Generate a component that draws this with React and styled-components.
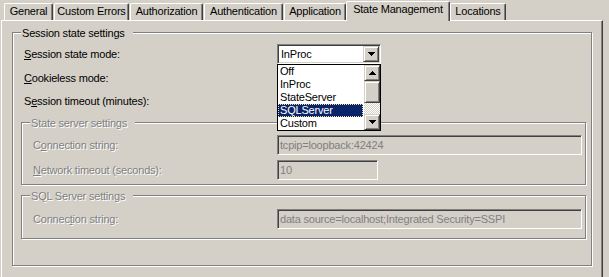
import React from 'react';
import styled, { createGlobalStyle } from 'styled-components';

const GlobalStyle = createGlobalStyle`
  html, body { margin: 0; padding: 0; background: #D4D0C8; overflow: hidden; }
  body {
    font-family: "Liberation Sans", Arial, sans-serif;
    font-size: 11px;
    line-height: 13px;
    letter-spacing: -0.2px;
    color: #000;
  }
  * { box-sizing: border-box; }
  u { text-decoration-thickness: 1px; text-underline-offset: 1px; }
`;

const Window = styled.div`
  width: 609px;
  height: 277px;
  overflow: hidden;
  padding-top: 1px;
`;

const TabStrip = styled.div`
  display: flex;
  align-items: flex-end;
  height: 19px;
  padding-left: 4px;
  position: relative;
  z-index: 2;
`;

const Tab = styled.div`
  flex: none;
  width: ${(p) => p.$w}px;
  margin-right: ${(p) => p.$m}px;
  height: ${(p) => (p.$active ? 20 : 17)}px;
  margin-bottom: ${(p) => (p.$active ? -1 : 0)}px;
  background: #D4D0C8;
  border-left: 1px solid #fff;
  border-top: 1px solid #fff;
  border-right: 1px solid #404040;
  border-radius: 2px 2px 0 0;
  box-shadow: inset -1px 0 0 #808080;
  padding-top: 1px;
  text-align: center;
  white-space: nowrap;
`;

const Panel = styled.div`
  margin-left: 1px;
  width: 602px;
  height: 300px;
  border-top: 1px solid #fff;
  border-left: 1px solid #fff;
  border-right: 1px solid #404040;
  border-bottom: 1px solid #404040;
  box-shadow: inset -1px -1px 0 #808080;
  padding: 11px 10px 0 10px;
`;

const Group = styled.div`
  display: flex;
  flex-direction: column;
  align-items: flex-start;
  border: 1px solid #808080;
  box-shadow: inset 1px 1px 0 #fff, 1px 1px 0 #fff;
  margin-top: ${(p) => p.$mt || 0}px;
  padding: 0 ${(p) => p.$pr || 0}px ${(p) => p.$pb || 0}px ${(p) => p.$pl || 0}px;
  align-self: stretch;
`;

const Caption = styled.div`
  margin: -6px 0 0 ${(p) => p.$ml || 0}px;
  padding: 0 8px 0 1px;
  background: #D4D0C8;
  line-height: 13px;
  white-space: nowrap;
  color: ${(p) => (p.$disabled ? '#808080' : '#000')};
  text-shadow: ${(p) => (p.$disabled ? '1px 1px 0 #fff' : 'none')};
`;

const Row = styled.div`
  display: grid;
  grid-template-columns: ${(p) => p.$label}px auto;
  align-items: center;
  height: 20px;
  margin-top: ${(p) => p.$mt}px;
  padding-left: ${(p) => p.$pl}px;
`;

const Label = styled.div`
  white-space: nowrap;
  color: ${(p) => (p.$disabled ? '#808080' : '#000')};
  text-shadow: ${(p) => (p.$disabled ? '1px 1px 0 #fff' : 'none')};
`;

const sunken = `
  border: 1px solid;
  border-color: #808080 #fff #fff #808080;
  box-shadow: inset 1px 1px 0 #404040, inset -1px -1px 0 #D4D0C8;
`;

const raised = `
  border: 1px solid;
  border-color: #D4D0C8 #404040 #404040 #D4D0C8;
  box-shadow: inset 1px 1px 0 #fff, inset -1px -1px 0 #808080;
  background: #D4D0C8;
`;

const TextBox = styled.div`
  ${sunken}
  width: ${(p) => p.$w}px;
  height: 20px;
  padding: 1px 1px 1px 2px;
  line-height: 16px;
  background: #D4D0C8;
  color: #808080;
  white-space: nowrap;
  overflow: hidden;
`;

const Combo = styled.div`
  position: relative;
  z-index: 5;
  width: 104px;
  height: 20px;
`;

const ComboField = styled.div`
  ${sunken}
  display: flex;
  align-items: center;
  height: 20px;
  padding: 1px;
  background: #fff;
`;

const ComboText = styled.div`
  flex: 1;
  padding-left: 2px;
  line-height: 16px;
`;

const ArrowButton = styled.div`
  ${raised}
  flex: none;
  display: flex;
  align-items: center;
  justify-content: center;
  width: 16px;
  height: ${(p) => p.$h || 16}px;
`;

const DropList = styled.div`
  position: absolute;
  top: 20px;
  left: 0;
  width: 104px;
  height: 67px;
  border: 1px solid #000;
  background: #fff;
  display: flex;
`;

const Items = styled.div`
  flex: 1;
  display: flex;
  flex-direction: column;
  padding-right: 1px;
`;

const Item = styled.div`
  height: 13px;
  line-height: 13px;
  padding-left: 2px;
  white-space: nowrap;
  background: ${(p) => (p.$sel ? '#0A246A' : 'transparent')};
  color: ${(p) => (p.$sel ? '#fff' : '#000')};
  outline: ${(p) => (p.$sel ? '1px dotted #F5DB95' : 'none')};
  outline-offset: -1px;
`;

const ScrollBar = styled.div`
  flex: none;
  width: 16px;
  display: flex;
  flex-direction: column;
`;

const Thumb = styled.div`
  ${raised}
  height: 22px;
`;

const Track = styled.div`
  flex: 1;
  background: repeating-conic-gradient(#fff 0 25%, #D4D0C8 0 50%) 0 0 / 2px 2px;
`;

const Arrow = ({ up }) => (
  <svg width="7" height="4" viewBox="0 0 7 4" style={{ display: 'block' }}>
    <path d={up ? 'M3.5 0 L7 4 L0 4 Z' : 'M0 0 L7 0 L3.5 4 Z'} fill="#000" shapeRendering="crispEdges" />
  </svg>
);

const tabs = [
  { label: 'General', w: 49, m: 1 },
  { label: 'Custom Errors', w: 75, m: 1 },
  { label: 'Authorization', w: 73, m: 1 },
  { label: 'Authentication', w: 79, m: 1 },
  { label: 'Application', w: 62, m: 0 },
  { label: 'State Management', w: 104, m: 0, active: true },
  { label: 'Locations', w: 56, m: 0 },
];

const modes = ['Off', 'InProc', 'StateServer', 'SQLServer', 'Custom'];

export default function App() {
  return (
    <>
      <GlobalStyle />
      <Window>
        <TabStrip>
          {tabs.map((t) => (
            <Tab key={t.label} $w={t.w} $m={t.m} $active={t.active}>
              {t.label}
            </Tab>
          ))}
        </TabStrip>
        <Panel>
          <Group $pl={8} $pr={5} $pb={26}>
            <Caption $ml={0}>Session state settings</Caption>
            <Row $label={253} $mt={4} $pl={3}>
              <Label><u>S</u>ession state mode:</Label>
              <Combo>
                <ComboField>
                  <ComboText>InProc</ComboText>
                  <ArrowButton><Arrow /></ArrowButton>
                </ComboField>
                <DropList>
                  <Items>
                    {modes.map((m) => (
                      <Item key={m} $sel={m === 'SQLServer'}>{m}</Item>
                    ))}
                  </Items>
                  <ScrollBar>
                    <ArrowButton><Arrow up /></ArrowButton>
                    <Thumb />
                    <Track />
                    <ArrowButton><Arrow /></ArrowButton>
                  </ScrollBar>
                </DropList>
              </Combo>
            </Row>
            <Row $label={253} $mt={4} $pl={3}>
              <Label><u>C</u>ookieless mode:</Label>
              <span />
            </Row>
            <Row $label={253} $mt={3} $pl={3}>
              <Label>S<u>e</u>ssion timeout (minutes):</Label>
              <span />
            </Row>

            <Group $mt={11} $pl={0} $pr={0} $pb={4}>
              <Caption $ml={8} $disabled>State server settings</Caption>
              <Row $label={244} $mt={5} $pl={11}>
                <Label $disabled>C<u>o</u>nnection string:</Label>
                <TextBox $w={305}>tcpip=loopback:42424</TextBox>
              </Row>
              <Row $label={244} $mt={5} $pl={11}>
                <Label $disabled><u>N</u>etwork timeout (seconds):</Label>
                <TextBox $w={101}>10</TextBox>
              </Row>
            </Group>

            <Group $mt={10} $pl={0} $pr={0} $pb={9}>
              <Caption $ml={8} $disabled>SQL Server settings</Caption>
              <Row $label={244} $mt={6} $pl={11}>
                <Label $disabled>Connec<u>t</u>ion string:</Label>
                <TextBox $w={305}>data source=localhost;Integrated Security=SSPI</TextBox>
              </Row>
            </Group>
          </Group>
        </Panel>
      </Window>
    </>
  );
}
